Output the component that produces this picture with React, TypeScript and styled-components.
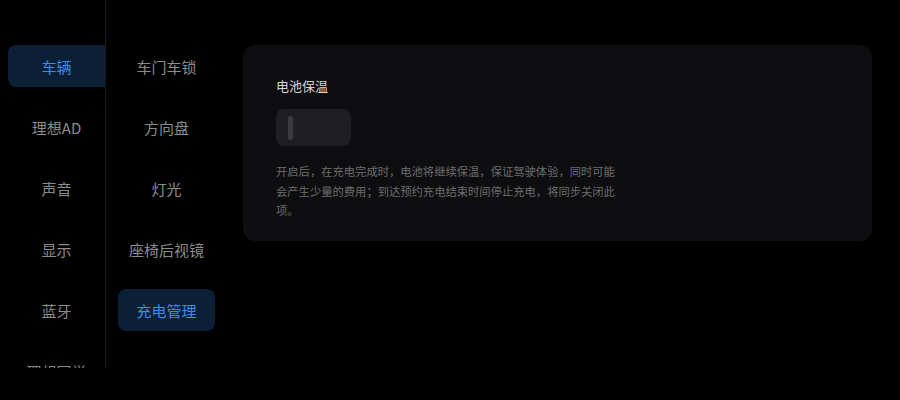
import React, { useState } from "react";
import styled, { createGlobalStyle } from "styled-components";

const Global = createGlobalStyle`
  html, body { margin: 0; padding: 0; background: #000; }
  body { font-family: "Noto Sans CJK SC", "Noto Sans", sans-serif; }
  * { box-sizing: border-box; }
`;

const Page = styled.div`
  width: 900px;
  height: 400px;
  display: flex;
  background: #000;
  overflow: hidden;
`;

const PrimaryNav = styled.nav`
  width: 106px;
  height: 368px;
  flex: none;
  padding: 45px 0 0 8px;
  border-right: 1px solid #1a1a1c;
  display: flex;
  flex-direction: column;
  gap: 19px;
  overflow: hidden;
`;

const SecondaryNav = styled.nav`
  width: 137px;
  flex: none;
  padding: 45px 0 0 12px;
  display: flex;
  flex-direction: column;
  gap: 19px;
`;

const NavItem = styled.div<{ $active?: boolean; $flushRight?: boolean }>`
  width: 97px;
  height: 42px;
  flex: none;
  display: flex;
  align-items: center;
  justify-content: center;
  font-size: 15px;
  color: ${(p) => (p.$active ? "#3a8ee6" : "#8c8c8c")};
  background: ${(p) => (p.$active ? "#0b1f36" : "transparent")};
  border-radius: ${(p) => (p.$flushRight ? "8px 0 0 8px" : "8px")};
  white-space: nowrap;
`;

const Content = styled.main`
  flex: 1;
  padding: 45px 28px 0 0;
`;

const Card = styled.section`
  background: #0e0e10;
  border-radius: 12px;
  padding: 32px 33px 20px;
`;

const Title = styled.div`
  font-size: 13px;
  line-height: 18px;
  color: #d6d6d6;
`;

const Toggle = styled.button`
  margin-top: 14px;
  width: 75px;
  height: 37px;
  border: none;
  border-radius: 8px;
  background: #1f1f22;
  padding: 0 0 0 12px;
  display: flex;
  align-items: center;
  cursor: pointer;
`;

const Knob = styled.span`
  width: 5px;
  height: 24px;
  border-radius: 2px;
  background: #3a3a3f;
`;

const Description = styled.p`
  margin: 16px 0 0;
  width: 340px;
  font-size: 11.3px;
  line-height: 19.5px;
  color: #6c6c6c;
`;

const primary = ["车辆", "理想AD", "声音", "显示", "蓝牙", "理想同学"];
const secondary = ["车门车锁", "方向盘", "灯光", "座椅后视镜", "充电管理"];

export default function App() {
  const [on, setOn] = useState(false);
  return (
    <Page>
      <Global />
      <PrimaryNav>
        {primary.map((p, i) => (
          <NavItem key={p} $active={i === 0} $flushRight>
            {p}
          </NavItem>
        ))}
      </PrimaryNav>
      <SecondaryNav>
        {secondary.map((s, i) => (
          <NavItem key={s} $active={i === 4}>
            {s}
          </NavItem>
        ))}
      </SecondaryNav>
      <Content>
        <Card>
          <Title>电池保温</Title>
          <Toggle aria-pressed={on} onClick={() => setOn(!on)}>
            <Knob />
          </Toggle>
          <Description>
            开启后，在充电完成时，电池将继续保温，保证驾驶体验，同时可能会产生少量的费用；到达预约充电结束时间停止充电，将同步关闭此项。
          </Description>
        </Card>
      </Content>
    </Page>
  );
}
